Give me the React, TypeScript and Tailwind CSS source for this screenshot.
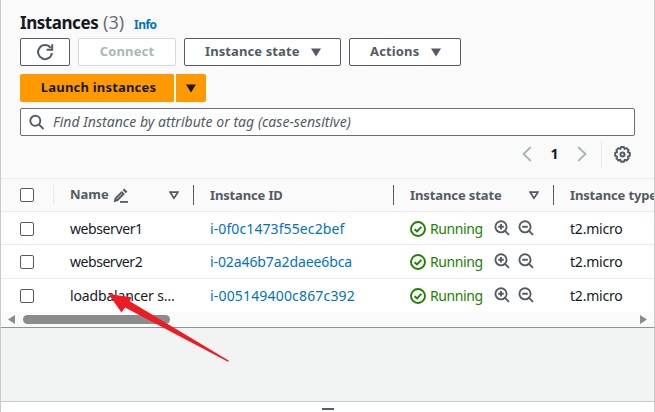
import type { ReactNode } from "react";

const rows = [
  { name: "webserver1", nameCls: "tracking-[-0.4px]", id: "i-0f0c1473f55ec2bef", idCls: "tracking-[0.1px]", h: "h-[33px] pt-[2px]" },
  { name: "webserver2", nameCls: "tracking-[-0.45px]", id: "i-02a46b7a2daee6bca", idCls: "tracking-[-0.1px]", h: "h-[34px] pt-px" },
  { name: "loadbalancer s…", nameCls: "tracking-[-0.15px]", id: "i-005149400c867c392", idCls: "tracking-[0.17px]", h: "h-[33px] pt-px" },
];

function Caret({ className = "" }: { className?: string }) {
  return (
    <svg width="10" height="9" viewBox="0 0 10 9" className={className}>
      <path d="M0 0.5h10L5 8.5z" fill="currentColor" />
    </svg>
  );
}

function SortIcon() {
  return (
    <svg width="10" height="9" viewBox="0 0 10 9" fill="none" stroke="#545b64" strokeWidth="1.7">
      <path d="M1.2 1.2h7.6L5 7.2z" />
    </svg>
  );
}

function Checkbox() {
  return <span className="block size-[14px] rounded-[2px] border border-[#545b64] bg-white" />;
}

function Magnifier({ plus }: { plus?: boolean }) {
  return (
    <svg width="16" height="16" viewBox="0 0 16 16" fill="none" stroke="#545b64" strokeWidth="1.9">
      <circle cx="7" cy="6.8" r="5.6" />
      <path d="M11 10.8l4 4M4.2 6.8h5.6" />
      {plus && <path d="M7 4v5.6" />}
    </svg>
  );
}

function StatusIcon() {
  return (
    <svg width="16" height="16" viewBox="0 0 16 16" fill="none" stroke="#1d8102" strokeWidth="1.9">
      <circle cx="8" cy="8" r="7" />
      <path d="M4.6 8.2l2.4 2.2 4.4-4.6" />
    </svg>
  );
}

function HeaderCell({ className, children }: { className: string; children: ReactNode }) {
  return (
    <div className={`flex h-full shrink-0 items-center font-bold whitespace-nowrap text-[#545b64] ${className}`}>
      {children}
    </div>
  );
}

function Divider({ className }: { className: string }) {
  return <span className={`h-5 w-px shrink-0 ${className}`} />;
}

export default function App() {
  return (
    <div className="relative h-[412px] w-[655px] overflow-hidden bg-[#f2f3f3] font-['Noto_Sans','Open_Sans',sans-serif] text-[13px] text-[#16191f]">
      <div className="flex h-full flex-col border-x border-[#c4cccc]">
        <section className="flex h-[328px] flex-col border-b border-[#879596] bg-[#fafafa]">
          <header className="flex h-[178px] flex-col pr-[19px] pl-[19px]">
            <div className="flex h-[38px] items-baseline pt-[9px] leading-[26px]">
              <h1 className="w-[83px] text-[17px] font-bold tracking-[-0.45px]">Instances</h1>
              <span className="w-[31px] text-[18px] text-[#687078]">(3)</span>
              <a className="text-[12px] font-bold tracking-[-0.5px] text-[#0073bb]">Info</a>
            </div>
            <div className="flex gap-2">
              <button className="flex h-7 w-[50px] items-center justify-center rounded-[2px] border border-[#545b64] bg-white">
                <svg width="18" height="18" viewBox="0 0 18 18" fill="none" stroke="#545b64" strokeWidth="2">
                  <path d="M16 10.2A7 7 0 1 1 14.6 4.8" />
                  <path d="M16.2 1.2v5.6h-5.6" />
                </svg>
              </button>
              <button className="flex h-7 w-[98px] items-center justify-center rounded-[2px] border border-[#d5dbdb] bg-white font-bold text-[#aab7b8]">
                <span className="tracking-[0.15px]">Connect</span>
              </button>
              <button className="flex h-7 w-[157px] items-center rounded-[2px] border border-[#545b64] bg-white pl-5 font-bold text-[#545b64]">
                <span className="w-[106px] text-left tracking-[0.1px]">Instance state</span>
                <Caret />
              </button>
              <button className="flex h-7 w-[112px] items-center rounded-[2px] border border-[#545b64] bg-white pl-5 font-bold text-[#545b64]">
                <span className="w-[61px] text-left tracking-[0.15px]">Actions</span>
                <Caret />
              </button>
            </div>
            <div className="mt-2 flex gap-[2px]">
              <button className="flex h-7 w-[154px] items-center justify-center rounded-l-[2px] bg-[#ff9900] pl-[3px] font-bold">
                <span className="tracking-[0.2px]">Launch instances</span>
              </button>
              <button className="flex h-7 w-[30px] items-center justify-center rounded-r-[2px] bg-[#ff9900]">
                <Caret />
              </button>
            </div>
            <div className="mt-[6px] flex h-7 items-center rounded-[2px] border border-[#687078] bg-white pl-2 text-[#545b64]">
              <svg width="16" height="16" viewBox="0 0 16 16" fill="none" stroke="#545b64" strokeWidth="1.9">
                <circle cx="6.3" cy="6.8" r="5" />
                <path d="M9.9 10.4l4.6 4.6" />
              </svg>
              <span className="mb-px ml-2 text-[14px] italic tracking-[0.03px]">Find Instance by attribute or tag (case-sensitive)</span>
            </div>
            <div className="mt-1 flex h-7 items-center justify-end">
              <svg width="10" height="16" viewBox="0 0 10 16" fill="none" stroke="#aab7b8" strokeWidth="2">
                <path d="M8.8 1L1.6 8l7.2 7" />
              </svg>
              <span className="mb-px w-[45px] text-center text-[14px] font-bold">1</span>
              <svg width="10" height="16" viewBox="0 0 10 16" fill="none" stroke="#aab7b8" strokeWidth="2">
                <path d="M1.2 1l7.2 7-7.2 7" />
              </svg>
              <span className="ml-[14px] h-7 w-px bg-[#eaeded]" />
              <svg className="mr-1 ml-3" width="17" height="17" viewBox="0.7 0.2 15.6 15.6" fill="none" stroke="#545b64" strokeWidth="1.8" strokeLinejoin="round">
                <path d="M7.2 1.2h2.6l.7 1.7 1.7-.7 1.9 1.9-.7 1.7 1.8.7v2.7l-1.8.7.7 1.7-1.9 1.9-1.7-.7-.7 1.8H7.2l-.7-1.8-1.7.7-1.9-1.9.7-1.7-1.8-.7V6.5l1.8-.7-.7-1.7 1.9-1.9 1.7.7z" />
                <circle cx="8.5" cy="8" r="1.9" />
              </svg>
            </div>
          </header>

          <div className="flex h-[34px] shrink-0 items-center overflow-hidden border-y border-[#eaeded]">
            <HeaderCell className="w-[52px] pl-[19px]"><Checkbox /></HeaderCell>
            <Divider className="bg-[#eaeded]" />
            <HeaderCell className="w-[139px] pl-4">
              <span className="w-[43px]">Name</span>
              <svg width="15" height="15" viewBox="0 0 15 15" fill="#545b64">
                <path d="M0.6 14.2l1.2-4.4 6.9-6.9 3.2 3.2L5 13z" />
                <path d="M9.6 2l1.6-1.5 3.2 3.1-1.6 1.6z" />
                <path d="M7 13h8v1.8H7z" />
                <path d="M3.2 10.6l5.5-5.4.8.8-5.5 5.4z" fill="#fafafa" fillOpacity="0.45" />
              </svg>
              <span className="ml-[41px]"><SortIcon /></span>
            </HeaderCell>
            <Divider className="bg-[#545b64]" />
            <HeaderCell className="w-[199px] pt-px pl-4"><span className="tracking-[-0.15px]">Instance ID</span></HeaderCell>
            <Divider className="bg-[#545b64]" />
            <HeaderCell className="w-[159px] pt-px pl-4">
              <span className="w-[119px] tracking-[-0.1px]">Instance state</span>
              <SortIcon />
            </HeaderCell>
            <Divider className="bg-[#545b64]" />
            <HeaderCell className="w-[100px] pt-px pl-4"><span className="tracking-[-0.15px]">Instance type</span></HeaderCell>
          </div>

          {rows.map((r, i) => (
            <div key={r.id} className={`flex shrink-0 items-center overflow-hidden bg-white text-[14px] whitespace-nowrap ${r.h} ${i < 2 ? "border-b border-[#eaeded]" : ""}`}>
              <div className="w-[69px] shrink-0 pl-[19px]"><Checkbox /></div>
              <div className="mb-[2px] w-[140px] shrink-0"><span className={r.nameCls}>{r.name}</span></div>
              <div className="mb-[2px] w-[200px] shrink-0 text-[#0073bb]"><span className={r.idCls}>{r.id}</span></div>
              <div className="flex w-[160px] shrink-0 items-center text-[#1d8102]">
                <StatusIcon />
                <span className="mb-px ml-1 w-[64px] tracking-[-0.4px]">Running</span>
                <span className="mb-[3px] flex gap-2">
                  <Magnifier plus />
                  <Magnifier />
                </span>
              </div>
              <div className="mb-[2px] shrink-0"><span className="tracking-[-0.2px]">t2.micro</span></div>
            </div>
          ))}

          <div className="flex flex-1 items-center bg-[#fafafa] pr-[7px] pl-[7px]">
            <svg width="7" height="9" viewBox="0 0 7 9"><path d="M7 0v9L0 4.5z" fill="#8b8b8b" /></svg>
            <span className="ml-2 h-[9px] w-[147px] rounded-full bg-[#8b8b8b]" />
            <svg className="ml-auto" width="7" height="9" viewBox="0 0 7 9"><path d="M0 0v9l7-4.5z" fill="#8b8b8b" /></svg>
          </div>
        </section>
        <div className="h-[73px]" />
        <footer className="flex h-[11px] justify-center border-t border-[#c4cccc] bg-white pt-[6px]">
          <span className="h-[2px] w-3 bg-[#545b64]" />
        </footer>
      </div>

      <svg className="absolute top-[290px] left-[105px]" width="130" height="76" viewBox="105 290 130 76">
        <path d="M108.5 294L131.5 297.3 129.8 301.2 229 360.8 228 361.8 125 307.5 121.5 312.5z" fill="#ed1c24" />
      </svg>
    </div>
  );
}
